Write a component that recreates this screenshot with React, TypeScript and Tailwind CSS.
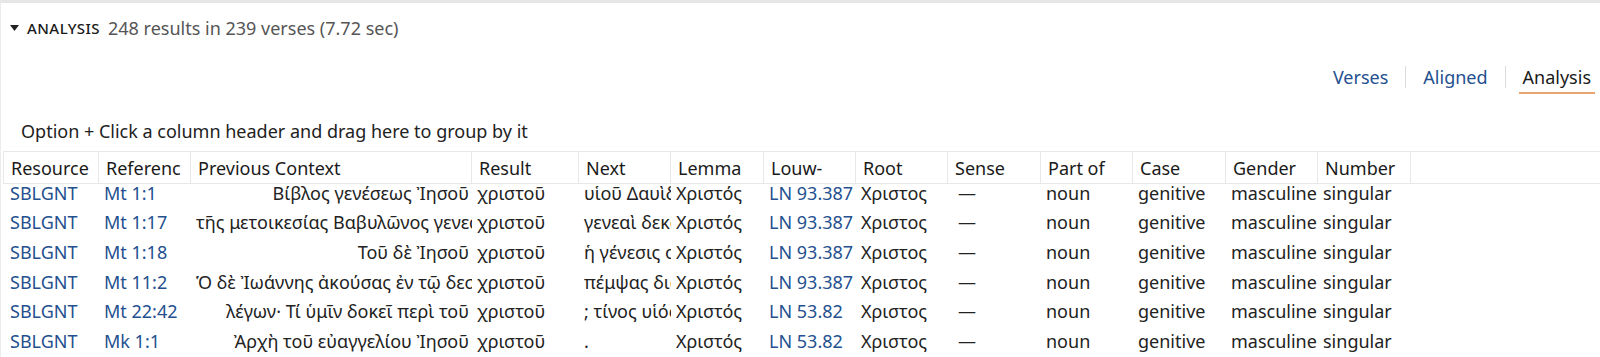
import React from "react";

const cols = [
  { key: "resource", label: "Resource" },
  { key: "ref", label: "Referenc" },
  { key: "prev", label: "Previous Context" },
  { key: "result", label: "Result" },
  { key: "next", label: "Next" },
  { key: "lemma", label: "Lemma" },
  { key: "ln", label: "Louw-" },
  { key: "root", label: "Root" },
  { key: "sense", label: "Sense" },
  { key: "pos", label: "Part of" },
  { key: "case", label: "Case" },
  { key: "gender", label: "Gender" },
  { key: "number", label: "Number" },
];

const rows = [
  { ref: "Mt 1:1", prev: "Βίβλος γενέσεως Ἰησοῦ", next: "υἱοῦ Δαυὶδ υἱοῦ Ἀβραάμ.", ln: "LN 93.387" },
  { ref: "Mt 1:17", prev: "τῆς μετοικεσίας Βαβυλῶνος γενεαὶ δεκατέσσαρες, καὶ ἀπὸ τῆς μετοικεσίας Βαβυλῶνος ἕως τοῦ", next: "γενεαὶ δεκατέσσαρες.", ln: "LN 93.387" },
  { ref: "Mt 1:18", prev: "Τοῦ δὲ Ἰησοῦ", next: "ἡ γένεσις οὕτως ἦν.", ln: "LN 93.387" },
  { ref: "Mt 11:2", prev: "Ὁ δὲ Ἰωάννης ἀκούσας ἐν τῷ δεσμωτηρίῳ τὰ ἔργα τοῦ", next: "πέμψας διὰ τῶν μαθητῶν αὐτοῦ", ln: "LN 93.387" },
  { ref: "Mt 22:42", prev: "λέγων· Τί ὑμῖν δοκεῖ περὶ τοῦ", next: "; τίνος υἱός ἐστιν;", ln: "LN 53.82" },
  { ref: "Mk 1:1", prev: "Ἀρχὴ τοῦ εὐαγγελίου Ἰησοῦ", next: ".", ln: "LN 53.82" },
];

const grid =
  "grid grid-cols-[95px_92px_281px_107px_92px_93px_92px_92px_93px_92px_93px_92px_93px_1fr]";

const link = "text-[#24508f]";

function Cell({ children, className = "" }: { children?: React.ReactNode; className?: string }) {
  return (
    <div className={"overflow-hidden whitespace-nowrap px-[5px] " + className}>{children}</div>
  );
}

export default function App() {
  return (
    <div
      className="h-[357px] w-[1600px] overflow-hidden border-l border-t-[3px] border-l-[#ececec] border-t-[#e6e6e6] bg-white text-[18px] leading-[24px] text-[#222]"
      style={{ fontFamily: '"Noto Sans", sans-serif' }}
    >
      <div className="flex h-[50px] items-center pl-[9px]">
        <svg width="9" height="6" viewBox="0 0 9 6" className="mr-[8px]">
          <path d="M0 0h9L4.5 6z" fill="#222" />
        </svg>
        <span className="mr-[8px] text-[15px] font-medium tracking-[0.03em] text-[#1a1a1a]">ANALYSIS</span>
        <span className="text-[#555]">248 results in 239 verses (7.72 sec)</span>
      </div>

      <div className="flex items-start justify-end pr-[5px] pt-[12px]">
        <span className={"px-[4px] pb-[5px] " + link}>Verses</span>
        <span className="mx-[13px] mt-[1px] h-[22px] w-px bg-[#dcdcdc]" />
        <span className={"px-[4px] pb-[5px] " + link}>Aligned</span>
        <span className="mx-[13px] mt-[1px] h-[22px] w-px bg-[#dcdcdc]" />
        <span className="border-b-2 border-[#e9a472] px-[4px] pb-[3px] text-[#1a1a1a]">Analysis</span>
      </div>

      <div className="mt-[25px] pl-[20px]">Option + Click a column header and drag here to group by it</div>

      <div className={grid + " ml-[2px] mt-[8px] h-[33px] border-y border-[#e8e8e8]"}>
        {cols.map((c) => (
          <div
            key={c.key}
            className="flex items-center overflow-hidden whitespace-nowrap border-l border-[#e8e8e8] px-[7px] text-[#1a1a1a]"
          >
            {c.label}
          </div>
        ))}
        <div className="border-l border-[#e8e8e8]" />
      </div>

      <div className="h-[200px] overflow-hidden">
        <div className="-mt-[6px] ml-[3px]">
          {rows.map((r) => (
            <div key={r.ref} className={grid + " h-[29.6px] items-center"}>
              <Cell className={"pl-[6px] " + link}>SBLGNT</Cell>
              <Cell className={link}>{r.ref}</Cell>
              <Cell className="pr-[3px] text-right">{r.prev}</Cell>
              <Cell>χριστοῦ</Cell>
              <Cell>{r.next}</Cell>
              <Cell>Χριστός</Cell>
              <Cell className={link}>{r.ln}</Cell>
              <Cell>Χριστος</Cell>
              <Cell className="pl-[10px]">—</Cell>
              <Cell>noun</Cell>
              <Cell>genitive</Cell>
              <Cell>masculine</Cell>
              <Cell>singular</Cell>
              <div />
            </div>
          ))}
        </div>
      </div>
    </div>
  );
}
